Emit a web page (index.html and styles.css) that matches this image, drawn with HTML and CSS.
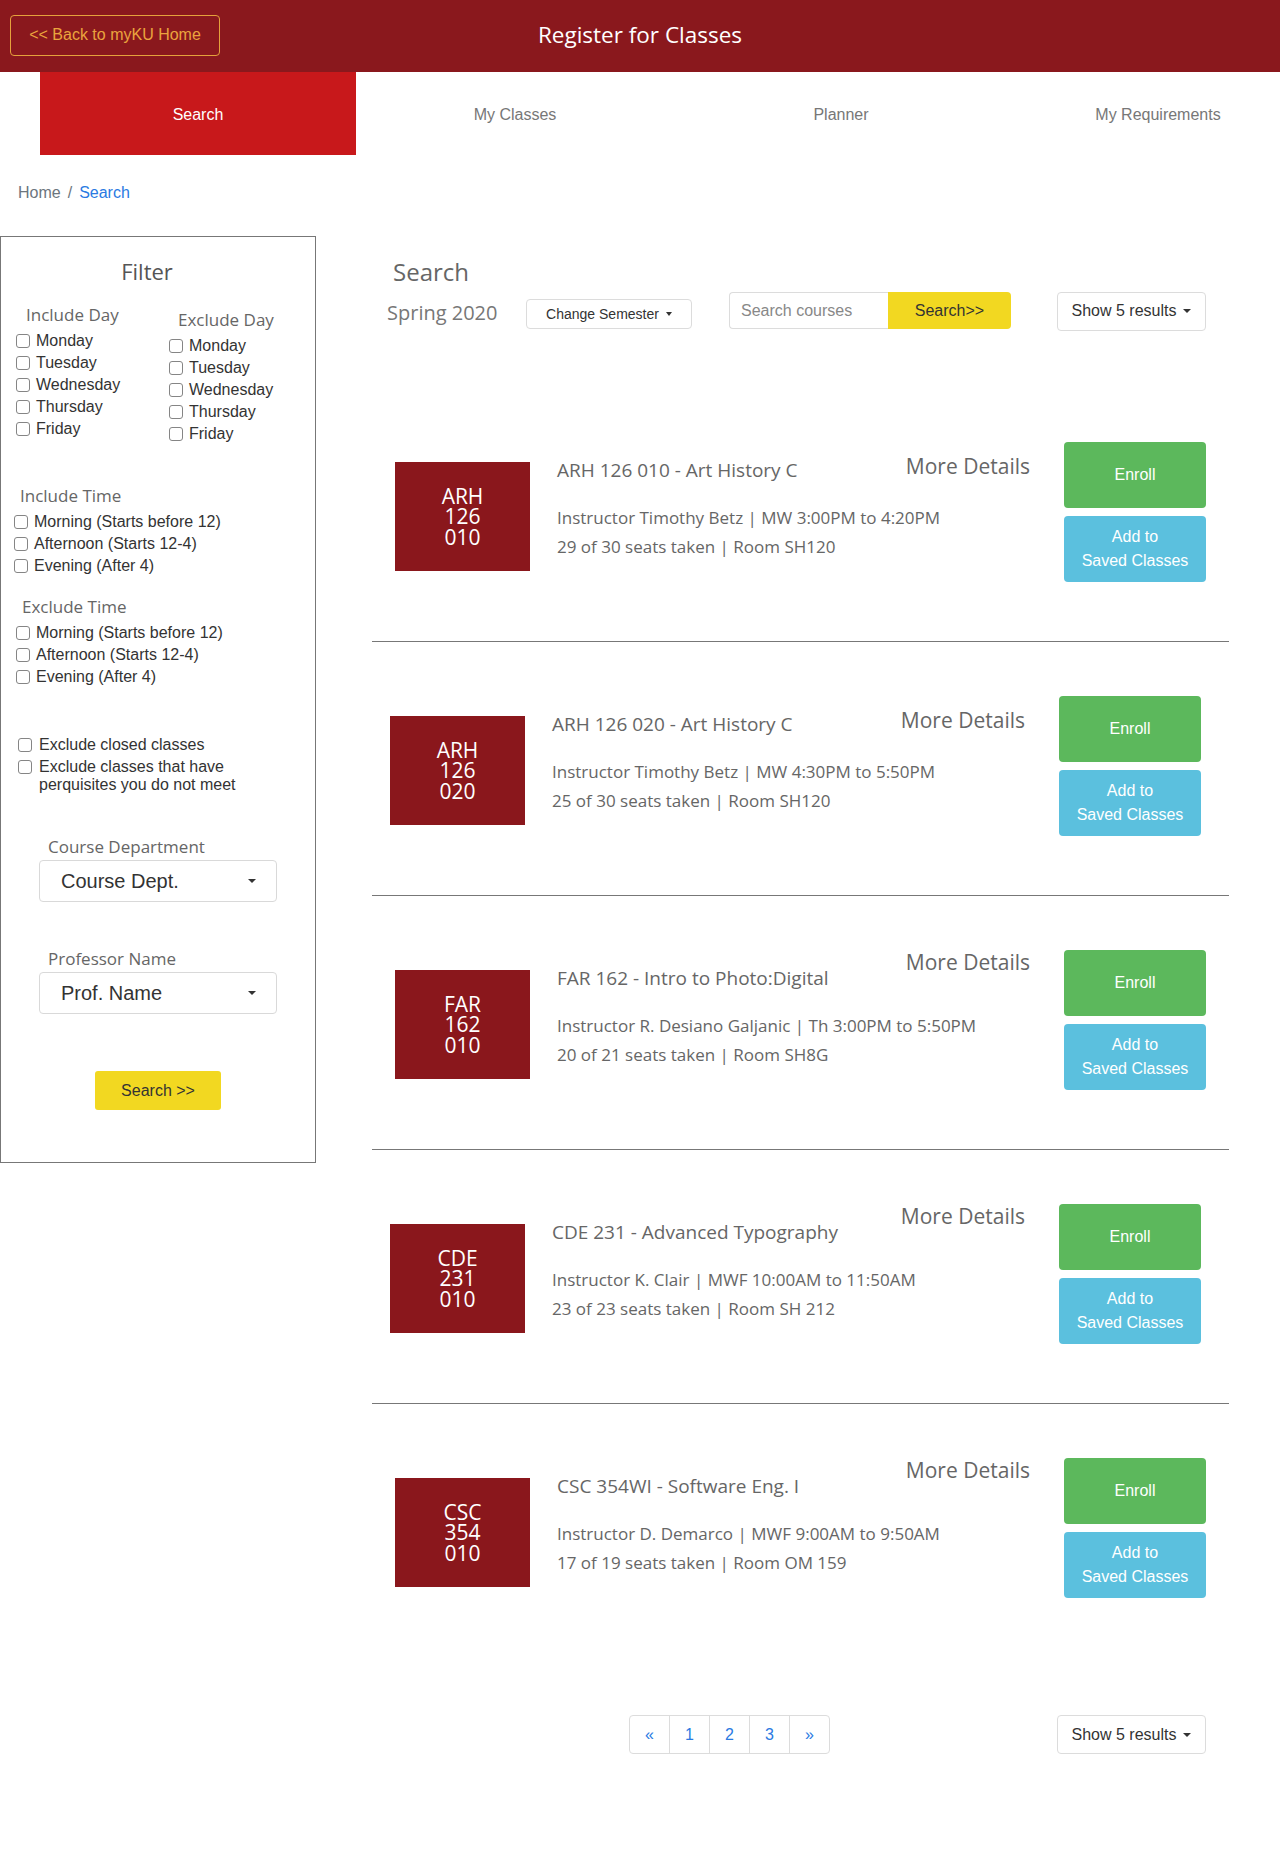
FILE: index.html
```html
<!DOCTYPE html>
<html lang="en">
<head>
<meta charset="utf-8">
<title>Register for Classes</title>
<link rel="stylesheet" href="styles.css">
</head>
<body>
<header class="topbar">
  <div class="topbar__left"><a class="back-btn" href="#">&lt;&lt; Back to myKU Home</a></div>
  <h1 class="topbar__title">Register for Classes</h1>
  <div></div>
</header>

<nav class="tabs">
  <a class="tab tab--active" href="#">Search</a>
  <a class="tab" href="#">My Classes</a>
  <a class="tab" href="#">Planner</a>
  <a class="tab tab--last" href="#">My Requirements</a>
</nav>

<div class="breadcrumb"><span class="crumb">Home</span><span class="crumb-sep">/</span><a class="crumb-link" href="#">Search</a></div>

<div class="layout">
  <aside class="filter">
    <h2 class="filter__title">Filter</h2>
    <div class="days">
      <div class="days__col">
        <h3 class="filter__heading filter__heading--inc-day">Include Day</h3>
        <label class="check"><input type="checkbox"><span>Monday</span></label>
        <label class="check"><input type="checkbox"><span>Tuesday</span></label>
        <label class="check"><input type="checkbox"><span>Wednesday</span></label>
        <label class="check"><input type="checkbox"><span>Thursday</span></label>
        <label class="check"><input type="checkbox"><span>Friday</span></label>
      </div>
      <div class="days__col days__col--exclude">
        <h3 class="filter__heading filter__heading--exc-day">Exclude Day</h3>
        <label class="check"><input type="checkbox"><span>Monday</span></label>
        <label class="check"><input type="checkbox"><span>Tuesday</span></label>
        <label class="check"><input type="checkbox"><span>Wednesday</span></label>
        <label class="check"><input type="checkbox"><span>Thursday</span></label>
        <label class="check"><input type="checkbox"><span>Friday</span></label>
      </div>
    </div>

    <div class="times times--include">
      <h3 class="filter__heading">Include Time</h3>
      <label class="check"><input type="checkbox"><span>Morning (Starts before 12)</span></label>
      <label class="check"><input type="checkbox"><span>Afternoon (Starts 12-4)</span></label>
      <label class="check"><input type="checkbox"><span>Evening (After 4)</span></label>
    </div>

    <div class="times times--exclude">
      <h3 class="filter__heading">Exclude Time</h3>
      <label class="check"><input type="checkbox"><span>Morning (Starts before 12)</span></label>
      <label class="check"><input type="checkbox"><span>Afternoon (Starts 12-4)</span></label>
      <label class="check"><input type="checkbox"><span>Evening (After 4)</span></label>
    </div>

    <div class="options">
      <label class="check check--tight"><input type="checkbox"><span>Exclude closed classes</span></label>
      <label class="check check--tight"><input type="checkbox"><span class="check__wrap">Exclude classes that have perquisites you do not meet</span></label>
    </div>

    <div class="field field--dept">
      <div class="field__label">Course Department</div>
      <div class="select"><span>Course Dept.</span><i class="caret"></i></div>
    </div>
    <div class="field field--prof">
      <div class="field__label">Professor Name</div>
      <div class="select"><span>Prof. Name</span><i class="caret"></i></div>
    </div>
    <div class="filter__actions"><button class="btn-yellow btn-yellow--side">Search &gt;&gt;</button></div>
  </aside>

  <main class="results">
    <h2 class="results__title">Search</h2>
    <div class="toolbar">
      <div class="toolbar__term">Spring 2020</div>
      <button class="btn-outline btn-outline--sem">Change Semester<i class="caret caret--sm"></i></button>
      <div class="search-group">
        <div class="search-group__input">Search courses</div>
        <button class="btn-yellow btn-yellow--group">Search&gt;&gt;</button>
      </div>
      <button class="btn-outline btn-outline--show">Show 5 results<i class="caret"></i></button>
    </div>

    <div class="courses">
      <div class="course">
        <div class="course__code">ARH<br>126<br>010</div>
        <div class="course__info">
          <div class="course__name">ARH 126 010 - Art History C</div>
          <div class="course__line course__line--first">Instructor Timothy Betz | MW 3:00PM to 4:20PM</div>
          <div class="course__line">29 of 30 seats taken | Room SH120</div>
        </div>
        <a class="course__more" href="#">More Details</a>
        <div class="course__actions">
          <button class="btn-enroll">Enroll</button>
          <button class="btn-save">Add to<br>Saved Classes</button>
        </div>
      </div>

      <div class="course course--shift">
        <div class="course__code">ARH<br>126<br>020</div>
        <div class="course__info">
          <div class="course__name">ARH 126 020 - Art History C</div>
          <div class="course__line course__line--first">Instructor Timothy Betz | MW 4:30PM to 5:50PM</div>
          <div class="course__line">25 of 30 seats taken | Room SH120</div>
        </div>
        <a class="course__more" href="#">More Details</a>
        <div class="course__actions">
          <button class="btn-enroll">Enroll</button>
          <button class="btn-save">Add to<br>Saved Classes</button>
        </div>
      </div>

      <div class="course course--raised">
        <div class="course__code">FAR<br>162<br>010</div>
        <div class="course__info">
          <div class="course__name">FAR 162 - Intro to Photo:Digital</div>
          <div class="course__line course__line--first">Instructor R. Desiano Galjanic | Th 3:00PM to 5:50PM</div>
          <div class="course__line">20 of 21 seats taken | Room SH8G</div>
        </div>
        <a class="course__more" href="#">More Details</a>
        <div class="course__actions">
          <button class="btn-enroll">Enroll</button>
          <button class="btn-save">Add to<br>Saved Classes</button>
        </div>
      </div>

      <div class="course course--shift course--raised">
        <div class="course__code">CDE<br>231<br>010</div>
        <div class="course__info">
          <div class="course__name">CDE 231 - Advanced Typography</div>
          <div class="course__line course__line--first">Instructor K. Clair | MWF 10:00AM to 11:50AM</div>
          <div class="course__line">23 of 23 seats taken | Room SH 212</div>
        </div>
        <a class="course__more" href="#">More Details</a>
        <div class="course__actions">
          <button class="btn-enroll">Enroll</button>
          <button class="btn-save">Add to<br>Saved Classes</button>
        </div>
      </div>

      <div class="course course--raised">
        <div class="course__code">CSC<br>354<br>010</div>
        <div class="course__info">
          <div class="course__name">CSC 354WI - Software Eng. I</div>
          <div class="course__line course__line--first">Instructor D. Demarco | MWF 9:00AM to 9:50AM</div>
          <div class="course__line">17 of 19 seats taken | Room OM 159</div>
        </div>
        <a class="course__more" href="#">More Details</a>
        <div class="course__actions">
          <button class="btn-enroll">Enroll</button>
          <button class="btn-save">Add to<br>Saved Classes</button>
        </div>
      </div>
    </div>

    <div class="pager-row">
      <ul class="pager">
        <li><a href="#">&laquo;</a></li>
        <li><a href="#">1</a></li>
        <li><a href="#">2</a></li>
        <li><a href="#">3</a></li>
        <li><a href="#">&raquo;</a></li>
      </ul>
      <button class="btn-outline btn-outline--show">Show 5 results<i class="caret"></i></button>
    </div>
  </main>
</div>
</body>
</html>
```

FILE: styles.css
```css
* { box-sizing: border-box; }

body {
  margin: 0;
  font-family: "Liberation Sans", Arial, sans-serif;
  font-size: 16px;
  color: #333;
  background: #fff;
}

a { text-decoration: none; }

button {
  font-family: "Liberation Sans", Arial, sans-serif;
  cursor: pointer;
}

/* ---------- header ---------- */
.topbar {
  height: 72px;
  background: #8a181d;
  display: grid;
  grid-template-columns: 1fr auto 1fr;
  align-items: center;
}

.topbar__left { padding-left: 10px; padding-bottom: 2px; }

.back-btn {
  display: inline-flex;
  align-items: center;
  justify-content: center;
  width: 210px;
  height: 41px;
  border: 1px solid #e5a13c;
  border-radius: 4px;
  color: #eaa43e;
  font-size: 16px;
}

.topbar__title {
  margin: 0 0 4px;
  font-family: "Open Sans", "Noto Sans", sans-serif;
  font-weight: 400;
  font-size: 22.5px;
  color: #fff;
}

/* ---------- tabs ---------- */
.tabs {
  display: grid;
  grid-template-columns: 316px 318px 334px 1fr;
  margin-left: 40px;
  height: 83px;
}

.tab {
  display: flex;
  align-items: center;
  justify-content: center;
  color: #777;
  font-size: 16px;
  padding-top: 2px;
}

.tab--active {
  background: #c8181b;
  color: #fff;
}

.tab--last { padding-left: 28px; }

/* ---------- breadcrumb ---------- */
.breadcrumb {
  margin-top: 26px;
  padding-left: 18px;
  line-height: 24px;
  font-size: 16px;
}

.crumb { color: #6c757d; }
.crumb-sep { color: #6c757d; padding: 0 7px; }
.crumb-link { color: #2a7ae2; }

/* ---------- layout ---------- */
.layout {
  display: flex;
  align-items: flex-start;
  margin-top: 31px;
}

/* ---------- filter ---------- */
.filter {
  width: 316px;
  flex: none;
  border: 1px solid #777;
  padding: 19px 0 52px;
}

.filter__title {
  margin: 0;
  text-align: center;
  font-family: "Open Sans", "Noto Sans", sans-serif;
  font-weight: 400;
  font-size: 22px;
  line-height: 30px;
  color: #555;
  padding-right: 22px;
}

.filter__heading {
  margin: 0;
  font-family: "Open Sans", "Noto Sans", sans-serif;
  font-weight: 400;
  font-size: 17px;
  line-height: 30px;
  color: #666;
}

.days {
  display: grid;
  grid-template-columns: 153px 1fr;
  padding-left: 15px;
  margin-top: 14px;
}

.filter__heading--inc-day { padding-left: 10px; }
.filter__heading--exc-day { padding-left: 9px; }

.days__col--exclude { margin-top: 5px; }

.check {
  display: flex;
  align-items: center;
  line-height: 22px;
  font-size: 16px;
  color: #333;
}

.check input {
  appearance: none;
  -webkit-appearance: none;
  width: 14px;
  height: 14px;
  margin: 0 6px 0 0;
  border: 1px solid #858585;
  border-radius: 3px;
  background: #fff;
  flex: none;
}

.times { margin-top: 36px; padding-left: 13px; }
.times .filter__heading { padding-left: 6px; }
.times--exclude { margin-top: 15px; padding-left: 15px; }

.options {
  margin-top: 48px;
  padding-left: 17px;
  display: flex;
  flex-direction: column;
  gap: 4px;
}

.check--tight { line-height: 18px; align-items: flex-start; }
.check--tight input { margin-top: 2px; margin-right: 7px; }
.check__wrap { max-width: 200px; }

.field { width: 238px; margin: 0 auto; }
.field--dept { margin-top: 42px; }
.field--prof { margin-top: 46px; }

.field__label {
  font-family: "Open Sans", "Noto Sans", sans-serif;
  font-size: 17px;
  line-height: 22px;
  color: #666;
  padding-left: 9px;
  margin-bottom: 2px;
}

.select {
  height: 42px;
  border: 1px solid #d9d9d9;
  border-radius: 4px;
  display: flex;
  align-items: center;
  justify-content: space-between;
  padding: 0 20px 0 21px;
  font-size: 20px;
  color: #333;
}

.caret {
  display: inline-block;
  width: 0;
  height: 0;
  border-top: 4px solid #333;
  border-left: 4px solid transparent;
  border-right: 4px solid transparent;
}

.caret--sm { margin-left: 6px; border-left-width: 3px; border-right-width: 3px; }

.filter__actions {
  margin-top: 57px;
  display: flex;
  justify-content: center;
}

.btn-yellow {
  background: #f2d821;
  border: 0;
  color: #333;
  font-size: 16px;
}

.btn-yellow--side {
  width: 126px;
  height: 39px;
  border-radius: 3px;
}

/* ---------- results ---------- */
.results {
  width: 857px;
  margin-left: 56px;
  padding-top: 20px;
}

.results__title {
  margin: 0;
  padding-left: 21px;
  font-family: "Open Sans", "Noto Sans", sans-serif;
  font-weight: 400;
  font-size: 24px;
  line-height: 32px;
  color: #666;
}

.toolbar {
  display: flex;
  align-items: center;
  padding-left: 15px;
  height: 42px;
  margin-top: 2px;
}

.toolbar__term {
  width: 139px;
  flex: none;
  font-family: "Open Sans", "Noto Sans", sans-serif;
  font-size: 20px;
  color: #777;
  margin-top: 2px;
}

.btn-outline {
  display: inline-flex;
  align-items: center;
  justify-content: center;
  background: #fff;
  border: 1px solid #dcdcdc;
  border-radius: 4px;
  color: #333;
  font-size: 16px;
  padding: 0;
}

.btn-outline .caret { margin-left: 7px; }

.btn-outline--sem {
  width: 166px;
  height: 30px;
  font-size: 14px;
  margin-top: 6px;
}

.btn-outline--show {
  width: 149px;
  height: 39px;
}

.search-group {
  display: flex;
  height: 37px;
  margin-left: 37px;
  margin-right: 46px;
  margin-bottom: 1px;
}

.search-group__input {
  width: 159px;
  border: 1px solid #dcdcdc;
  border-right: 0;
  border-radius: 4px 0 0 4px;
  display: flex;
  align-items: center;
  padding-left: 11px;
  color: #888;
  font-size: 16px;
}

.btn-yellow--group {
  width: 123px;
  border-radius: 0 4px 4px 0;
}

/* ---------- course rows ---------- */
.courses { margin-top: 56px; }

.course {
  display: flex;
  align-items: flex-start;
  padding: 54px 23px 59px 23px;
  border-bottom: 1px solid #777;
}

.course:last-child { border-bottom: 0; }

.course--shift { padding-left: 18px; padding-right: 28px; }

.course__code {
  width: 135px;
  height: 109px;
  flex: none;
  margin-top: 20px;
  margin-right: 27px;
  background: #8a171c;
  color: #fff;
  display: flex;
  align-items: center;
  justify-content: center;
  text-align: center;
  font-family: "Open Sans", "Noto Sans", sans-serif;
  font-size: 21px;
  line-height: 20.5px;
}

.course__info {
  flex: 1;
  min-width: 0;
  margin-top: 14px;
  color: #666;
  font-family: "Open Sans", "Noto Sans", sans-serif;
  white-space: nowrap;
}

.course__name {
  font-size: 19px;
  line-height: 28px;
}

.course__line {
  font-size: 17px;
  line-height: 29px;
}

.course__line--first { margin-top: 19px; }

.course__more {
  margin-top: 9px;
  margin-right: 34px;
  font-family: "Open Sans", "Noto Sans", sans-serif;
  font-size: 21px;
  line-height: 30px;
  color: #666;
  white-space: nowrap;
}

.course--raised .course__more { margin-top: -3px; }

.course__actions {
  width: 142px;
  flex: none;
  display: flex;
  flex-direction: column;
  gap: 8px;
}

.btn-enroll,
.btn-save {
  height: 66px;
  border: 0;
  border-radius: 4px;
  color: #fff;
  font-size: 16px;
  line-height: 24px;
  padding: 0;
}

.btn-enroll { background: #5cb85c; }
.btn-save { background: #5bc0de; }

/* ---------- pager ---------- */
.pager-row {
  display: flex;
  align-items: center;
  justify-content: space-between;
  margin-top: 58px;
  padding-left: 257px;
  padding-right: 23px;
}

.pager {
  display: flex;
  list-style: none;
  margin: 0;
  padding: 0;
  border: 1px solid #dcdcdc;
  border-radius: 4px;
  height: 39px;
}

.pager li + li { border-left: 1px solid #dcdcdc; }

.pager a {
  display: flex;
  align-items: center;
  justify-content: center;
  width: 39px;
  height: 100%;
  color: #2a7ae2;
  font-size: 16px;
}
```
